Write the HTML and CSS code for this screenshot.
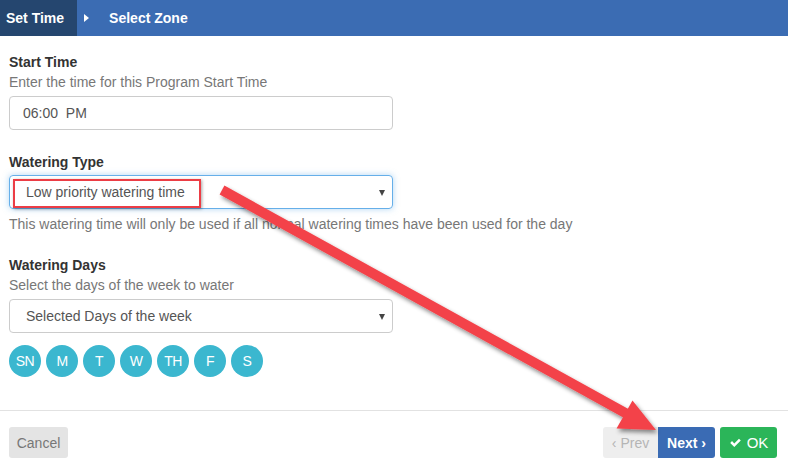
FILE: index.html
```html
<!DOCTYPE html>
<html lang="en">
<head>
  <meta charset="UTF-8" />
  <title>Program Wizard</title>
  <link rel="stylesheet" href="styles.css">
</head>
<body>
  <div class="wizard">
    <div class="steps">
      <div class="step active">Set Time</div>
      <div class="step-sep"></div>
      <div class="step">Select Zone</div>
    </div>

    <div class="content">
      <div class="form-group">
        <div class="label">Start Time</div>
        <div class="help">Enter the time for this Program Start Time</div>
        <div class="control time">06:00&nbsp;&nbsp;PM</div>
      </div>

      <div class="form-group">
        <div class="label">Watering Type</div>
        <div class="control select focused">
          <span>Low priority watering time</span>
          <div class="highlight"></div>
        </div>
        <div class="help after">This watering time will only be used if all normal watering times have been used for the day</div>
      </div>

      <div class="form-group">
        <div class="label">Watering Days</div>
        <div class="help">Select the days of the week to water</div>
        <div class="control select"><span>Selected Days of the week</span></div>
        <div class="days">
          <span class="day">SN</span>
          <span class="day">M</span>
          <span class="day">T</span>
          <span class="day">W</span>
          <span class="day">TH</span>
          <span class="day">F</span>
          <span class="day">S</span>
        </div>
      </div>
    </div>

    <div class="footer">
      <button class="btn btn-cancel">Cancel</button>
      <div class="nav">
        <div class="btn-group">
          <button class="btn btn-prev">&lsaquo; Prev</button>
          <button class="btn btn-next">Next &rsaquo;</button>
        </div>
        <button class="btn btn-ok">
          <svg viewBox="0 0 16 16"><path d="M1.5 8.5l2.2-2.2 2.8 2.8 5.8-5.8 2.2 2.2-8 8z"/></svg>
          OK
        </button>
      </div>
    </div>
  </div>

  <!-- annotation arrow drawn over the screenshot -->
  <svg class="annot" viewBox="0 0 788 473">
    <defs>
      <filter id="shadow" x="-10%" y="-10%" width="130%" height="130%">
        <feDropShadow dx="2" dy="3" stdDeviation="2" flood-color="#000" flood-opacity="0.45"/>
      </filter>
    </defs>
    <g filter="url(#shadow)" fill="#f3434a">
      <polygon points="219.6,194.4 224.4,185.6 629.8,409.7 625,418.5"/>
      <polygon points="616.5,428.5 632.5,400.5 656,430"/>
    </g>
  </svg>
</body>
</html>
```

FILE: styles.css
```css
* { margin: 0; padding: 0; box-sizing: border-box; }
html, body { height: 100%; background: #fff; }
body { font-family: "Liberation Sans", Arial, sans-serif; font-size: 14px; color: #333; overflow: hidden; }

.wizard { display: flex; flex-direction: column; height: 100vh; }

.steps { display: flex; align-items: center; height: 36px; background: #3b6cb3; color: #fff; font-weight: bold; }
.step { height: 100%; display: flex; align-items: center; padding: 0 6px; }
.step.active { background: #25466f; padding-right: 13px; }
.step-sep {
  width: 0; height: 0; margin: 0 14px 0 7px;
  border-top: 4px solid transparent; border-bottom: 4px solid transparent;
  border-left: 5px solid #fff;
}

.content { flex: 1; padding: 16px 9px 0; }
.form-group { margin-bottom: 22px; }
.form-group:nth-child(2) { margin-bottom: 21px; }
.label { font-weight: bold; line-height: 20px; }
.help { color: #777; line-height: 20px; margin-bottom: 4px; }
.help.after { margin: 5px 0 0; }

.control {
  position: relative;
  width: 384px; height: 34px;
  border: 1px solid #ccc; border-radius: 4px;
  display: flex; align-items: center;
  padding: 0 13px; color: #555;
}
.form-group:nth-child(2) .label { margin-bottom: 3px; }
.select { padding-left: 16px; }
.select::after {
  content: ""; position: absolute; right: 7px; top: 14px;
  border-left: 3.5px solid transparent; border-right: 3.5px solid transparent;
  border-top: 6px solid #444;
}
.select.focused { border-color: #66afe9; box-shadow: 0 0 6px rgba(102, 175, 233, .5); }

.highlight {
  position: absolute; left: 3px; top: 3px;
  width: 188px; height: 29px;
  border: 2px solid #ec3d45;
  box-shadow: 1px 1px 3px rgba(0, 0, 0, .35);
}

.days { display: flex; gap: 5px; margin-top: 12px; }
.day {
  width: 32px; height: 32px; border-radius: 50%;
  background: #3bb7cf; color: #fff; font-size: 14px;
  display: flex; align-items: center; justify-content: center;
  letter-spacing: -0.5px;
}

.footer {
  height: 63px; border-top: 1px solid #e2e2e2;
  display: flex; justify-content: space-between; align-items: flex-start;
  padding: 16px 11px 0 9px;
}
.btn {
  height: 31px; border: none; border-radius: 3px;
  font-family: inherit; font-size: 14px;
  padding: 0 7px; cursor: pointer;
  display: flex; align-items: center; gap: 5px;
}
.btn-cancel { background: #e4e4e4; color: #777; width: 59px; justify-content: center; }
.nav { display: flex; gap: 5px; }
.btn-group { display: flex; }
.btn-prev { background: #eeeeee; color: #b5b5b5; width: 55px; border-radius: 3px 0 0 3px; justify-content: center; }
.btn-next { background: #3a6bb4; color: #fff; font-weight: bold; width: 57px; border-radius: 0 3px 3px 0; justify-content: center; }
.btn-ok { background: #2bb559; color: #fff; font-size: 15px; width: 57px; justify-content: center; }
.btn-ok svg { width: 13px; height: 13px; fill: #fff; }

.annot { position: absolute; left: 0; top: 0; width: 788px; height: 473px; pointer-events: none; }
```
